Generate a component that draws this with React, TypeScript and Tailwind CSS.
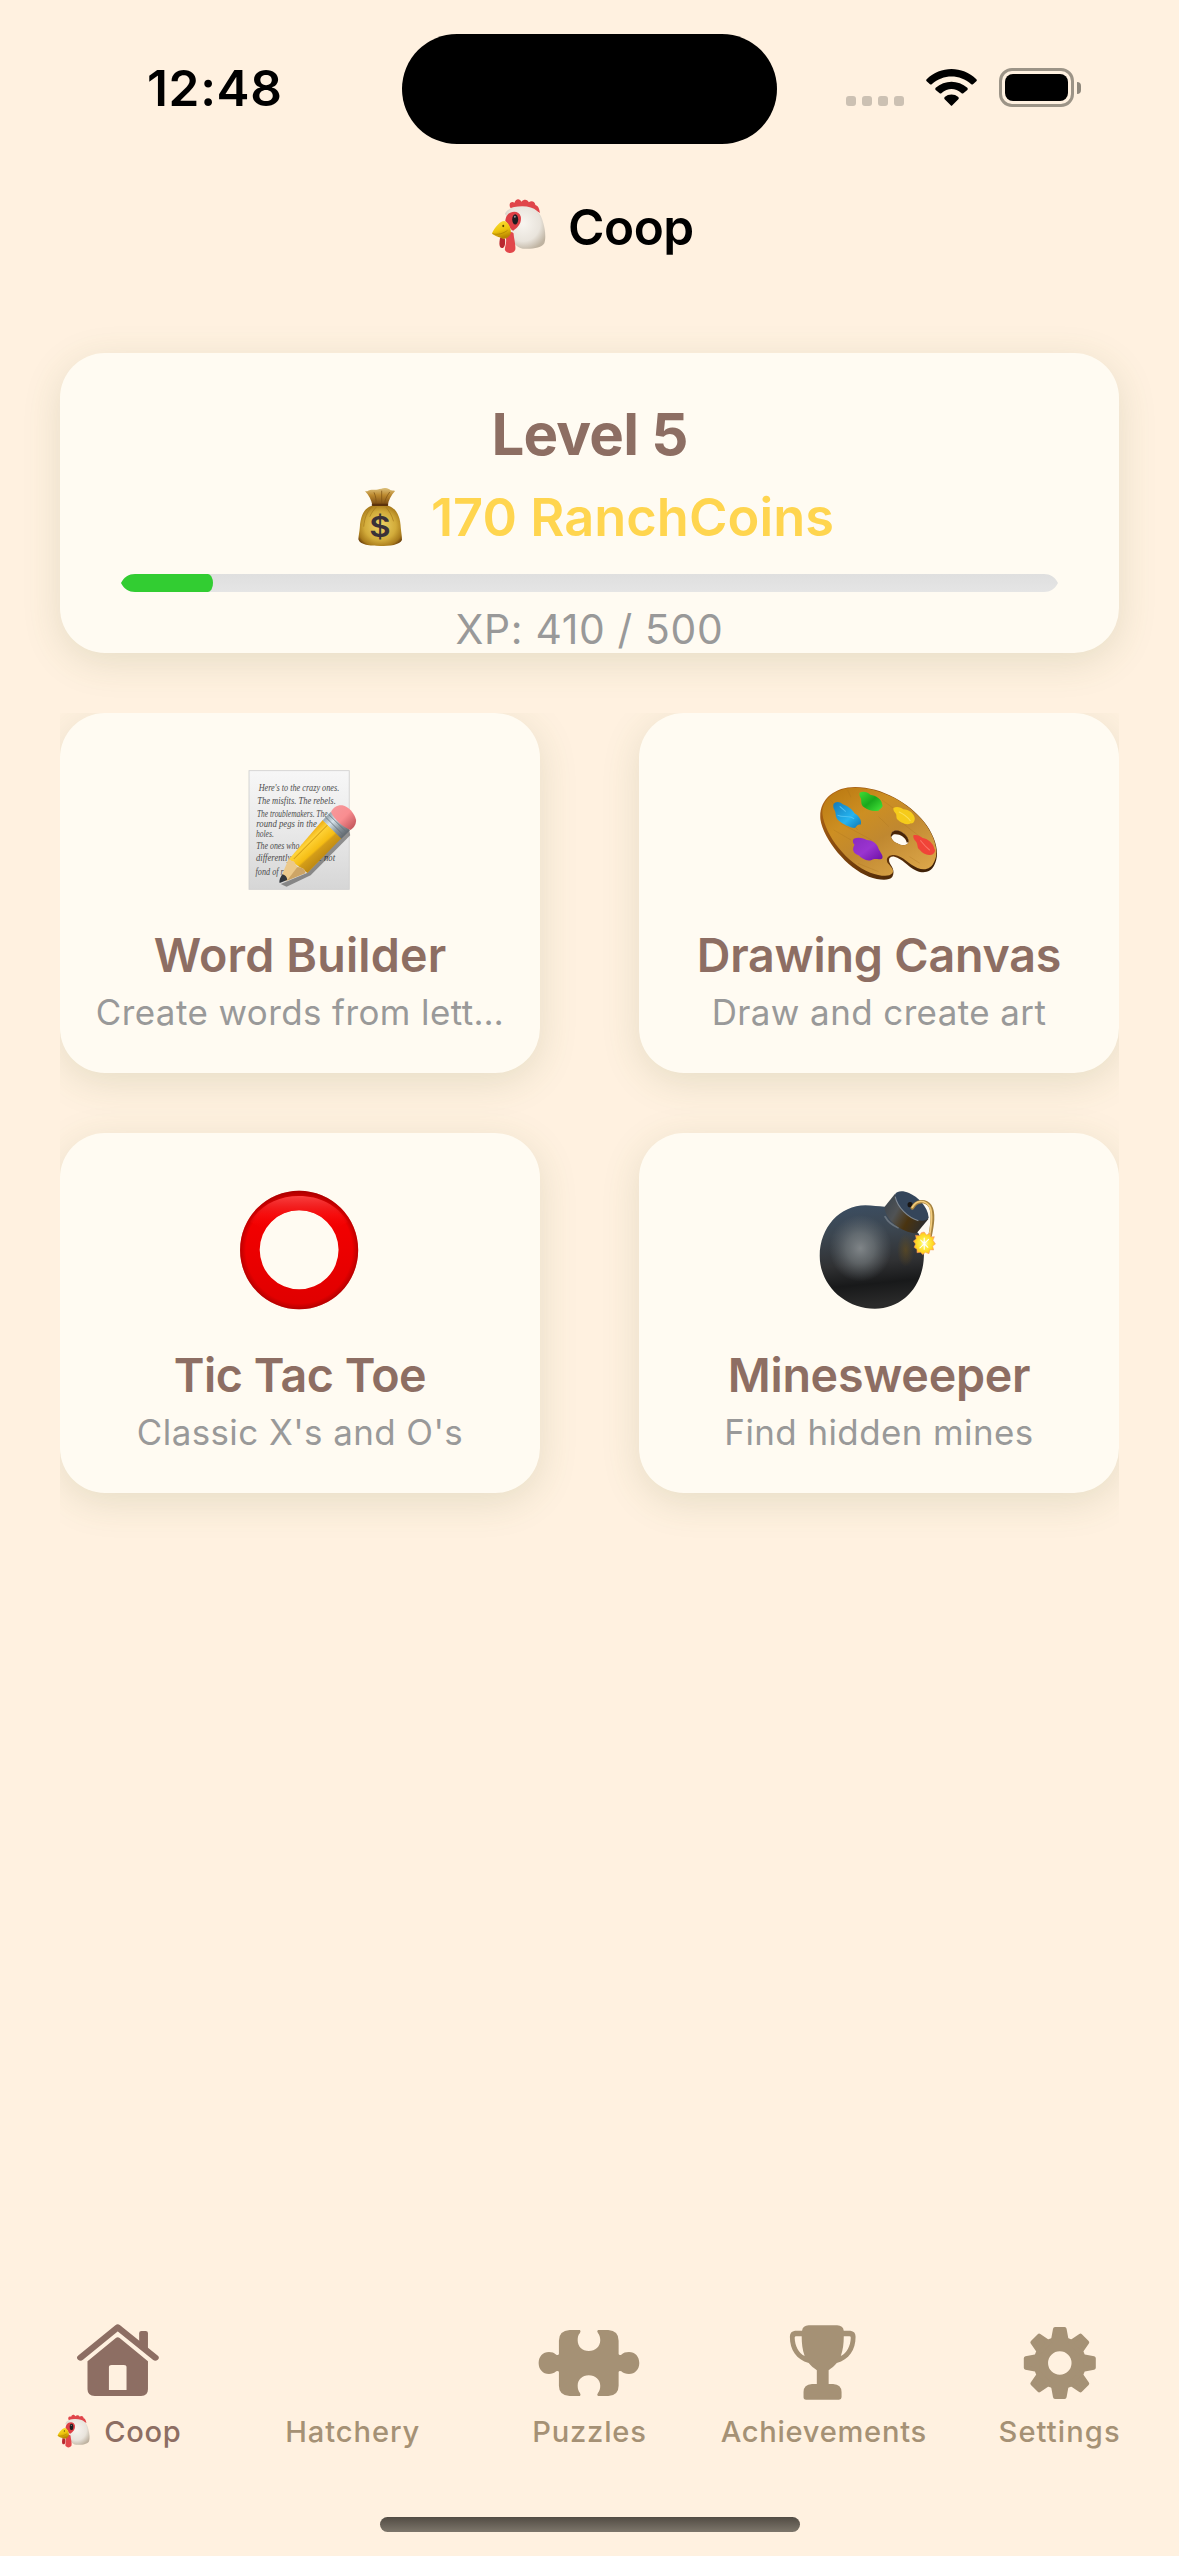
import React from 'react';

function Chicken({ id, className }: { id: string; className: string }) {
  return (
    <svg viewBox="92 54 166 168" preserveAspectRatio="none" className={className} aria-hidden="true">
      <defs>
        <radialGradient id={`${id}-head`} cx="0.45" cy="0.4" r="0.65">
          <stop offset="0" stopColor="#f8f5f0" />
          <stop offset="0.65" stopColor="#e9e4dc" />
          <stop offset="1" stopColor="#bfb3a1" />
        </radialGradient>
        <linearGradient id={`${id}-beak`} x1="0" y1="0" x2="0.3" y2="1">
          <stop offset="0" stopColor="#fbe33c" />
          <stop offset="0.6" stopColor="#edc40c" />
          <stop offset="1" stopColor="#b98500" />
        </linearGradient>
      </defs>
      <path fill="#e0454a" d="M151 84C144 72 152 61 163 68C166 55 179 54 184 65C191 57 203 58 206 67C214 60 225 64 226 75C235 77 238 88 240 99C220 86 180 78 151 84Z" />
      <path fill={`url(#${id}-head)`} d="M134 101C143 84 163 79 186 79C226 79 243 98 250 130C256 150 258 175 253 190C246 204 215 208 188 206C168 203 155 184 150 160C147 130 142 112 134 101Z" />
      <path fill="#dd4045" d="M141 106C150 92 177 90 182 110C185 132 172 142 159 152C150 150 144 130 135 123C136 117 137 111 141 106Z" />
      <path fill="#b9272e" d="M120 172L134 176C136 190 134 204 125 204C116 204 116 188 120 172Z" />
      <path fill="#e2474b" d="M137 174C139 162 150 150 160 160C161 176 168 198 165 210C160 222 139 222 134 210C133 200 140 190 137 174Z" />
      <ellipse cx="165" cy="118" rx="9" ry="15.5" fill="#1d1d20" />
      <ellipse cx="164" cy="110" rx="3" ry="3" fill="#8f939b" />
      <path fill={`url(#${id}-beak)`} d="M95 160C104 142 119 123 132 123C145 126 152 142 152 158C147 175 131 181 122 173C112 171 100 167 95 160Z" />
      <path d="M96 161C112 166 130 160 142 151" fill="none" stroke="#9b6f00" strokeWidth="1.6" />
      <ellipse cx="129" cy="138" rx="3" ry="3.5" fill="#5e4700" />
    </svg>
  );
}

function MoneyBag() {
  return (
    <svg viewBox="831 465 167.2 192" preserveAspectRatio="none" className="h-16 w-16 shrink-0" aria-hidden="true">
      <defs>
        <radialGradient id="bag-body" cx="0.5" cy="0.5" r="0.6">
          <stop offset="0" stopColor="#efd468" />
          <stop offset="0.6" stopColor="#d2ab3a" />
          <stop offset="0.88" stopColor="#a87a1b" />
          <stop offset="1" stopColor="#70440d" />
        </radialGradient>
        <linearGradient id="bag-top" x1="0" y1="0" x2="0" y2="1">
          <stop offset="0" stopColor="#dcc07c" />
          <stop offset="0.4" stopColor="#bd8a2f" />
          <stop offset="1" stopColor="#70420f" />
        </linearGradient>
      </defs>
      <path fill="url(#bag-top)" d="M875 483C881 487 886 478 894 479C904 481 910 477 918 476C925 473 933 474 939 478C944 484 948 479 954 483C944 496 936 511 935 527H895C892 510 886 496 875 483Z" />
      <path fill="none" stroke="#7d5215" strokeWidth="2" d="M899 487C904 500 905 512 904 522M919 482V522M940 486C931 500 928 510 926 522" />
      <path fill="url(#bag-body)" d="M893 527H936C958 535 968 560 969 595C970 608 972 618 972 630C966 645 940 648 915 648C888 648 862 645 858 628C859 615 861 605 862 590C864 558 873 534 893 527Z" />
      <path fill="none" stroke="#a67a1d" strokeWidth="2" d="M893 531C880 546 874 565 872 590M905 531C898 540 892 548 888 560M930 531C938 542 946 556 950 574" />
      <rect x="893" y="521" width="43" height="7" rx="3" fill="#5c330c" />
      <text x="914.5" y="622" textAnchor="middle" fontSize="86" className="font-['Inter'] font-semibold" fill="#3a3138">$</text>
    </svg>
  );
}

const NOTE_LINES = [
  { text: "Here's to the crazy ones.", x: 664, y: 302, w: 234 },
  { text: 'The misfits. The rebels.', x: 660, y: 341, w: 228 },
  { text: 'The troublemakers. The', x: 659, y: 380, w: 205 },
  { text: 'round pegs in the', x: 657, y: 410, w: 176 },
  { text: 'holes.', x: 656, y: 440, w: 52 },
  { text: 'The ones who see', x: 657, y: 478, w: 160 },
  { text: 'differently. They’re not', x: 656, y: 512, w: 230 },
  { text: 'fond of rules', x: 655, y: 554, w: 120 },
];

function Memo() {
  return (
    <svg viewBox="609.8 240 348.5 360" preserveAspectRatio="none" className="size-[120px]" aria-hidden="true">
      <defs>
        <linearGradient id="memo-paper" x1="0" y1="0" x2="0" y2="1">
          <stop offset="0" stopColor="#f7f7f7" />
          <stop offset="0.5" stopColor="#e9e9e9" />
          <stop offset="1" stopColor="#d6d6d6" />
        </linearGradient>
        <linearGradient id="memo-pencil" gradientUnits="userSpaceOnUse" x1="800" y1="440" x2="860" y2="505">
          <stop offset="0" stopColor="#eeb11a" />
          <stop offset="0.2" stopColor="#ffd338" />
          <stop offset="0.55" stopColor="#f5bd14" />
          <stop offset="0.62" stopColor="#d49d18" />
          <stop offset="1" stopColor="#b98512" />
        </linearGradient>
        <linearGradient id="memo-eraser" x1="0" y1="0" x2="1" y2="1">
          <stop offset="0" stopColor="#f59a9c" />
          <stop offset="0.5" stopColor="#f98d90" />
          <stop offset="1" stopColor="#b84a50" />
        </linearGradient>
        <linearGradient id="memo-ferrule" gradientUnits="userSpaceOnUse" x1="860" y1="370" x2="920" y2="435">
          <stop offset="0" stopColor="#83929d" />
          <stop offset="0.35" stopColor="#d6e3ea" />
          <stop offset="0.65" stopColor="#8b979f" />
          <stop offset="1" stopColor="#5c6368" />
        </linearGradient>
      </defs>
      <rect x="636" y="242" width="291" height="356" fill="url(#memo-paper)" stroke="#cfcfcf" strokeWidth="2.5" />
      {NOTE_LINES.map((l) => (
        <text key={l.text} x={l.x} y={l.y} textLength={l.w} lengthAdjust="spacingAndGlyphs" fontSize="28" fill="#4c4c4c" className="font-['Liberation_Serif'] italic">
          {l.text}
        </text>
      ))}
      <path fill="#000" opacity="0.38" d="M728 582L745 590L815 556L930 436L926 418L806 548Z" />
      <path fill="url(#memo-pencil)" d="M850 390L905 444L806 549L752 508Z" />
      <path fill="none" stroke="#d59f15" strokeWidth="3" d="M864 405L766 507" />
      <path fill="#ecc98b" d="M752 504C756 516 764 510 768 516C774 528 776 534 784 532C796 536 800 540 799 550L740 574L727 566Z" />
      <path fill="#cda566" d="M776 532C790 532 800 538 799 550L746 572Z" />
      <path fill="#33373c" d="M733 553C741 555 747 562 747 570L725 579C722 572 728 560 733 553Z" />
      <path fill="url(#memo-ferrule)" d="M874 365L929 421L904 446L850 391Z" />
      <path fill="none" stroke="#66717a" strokeWidth="2.5" d="M867 373L921 428M859 382L912 437" />
      <path fill="url(#memo-eraser)" d="M874 366C880 352 894 344 907 346C926 350 942 370 947 390C947 404 940 414 930 420C908 410 884 390 874 366Z" />
    </svg>
  );
}

function Palette() {
  return (
    <svg viewBox="607 240 348.5 360" preserveAspectRatio="none" className="size-[120px]" aria-hidden="true">
      <defs>
        <linearGradient id="pal-wood" x1="0" y1="0" x2="0.8" y2="1">
          <stop offset="0" stopColor="#b8760f" />
          <stop offset="0.35" stopColor="#cd8f22" />
          <stop offset="0.6" stopColor="#c08830" />
          <stop offset="1" stopColor="#dba548" />
        </linearGradient>
        <linearGradient id="pal-edge" x1="0" y1="0" x2="1" y2="1">
          <stop offset="0" stopColor="#b86a16" />
          <stop offset="0.6" stopColor="#6d3a0a" />
          <stop offset="1" stopColor="#2f1806" />
        </linearGradient>
        <linearGradient id="pal-blue" x1="0" y1="0" x2="1" y2="1">
          <stop offset="0" stopColor="#1479b8" />
          <stop offset="0.6" stopColor="#25b4f0" />
          <stop offset="1" stopColor="#1276b0" />
        </linearGradient>
        <linearGradient id="pal-green" x1="0" y1="0" x2="1" y2="1">
          <stop offset="0" stopColor="#3fdc35" />
          <stop offset="0.5" stopColor="#19a81c" />
          <stop offset="1" stopColor="#46e83c" />
        </linearGradient>
        <linearGradient id="pal-purple" x1="0" y1="0" x2="1" y2="1">
          <stop offset="0" stopColor="#8a2bc0" />
          <stop offset="0.5" stopColor="#9a34d0" />
          <stop offset="1" stopColor="#6b0fa4" />
        </linearGradient>
      </defs>
      <path fill="url(#pal-edge)" fillRule="evenodd" d="M611 388C606 330 650 291 712 291C790 291 870 340 912 395C945 438 960 490 942 525C932 546 912 552 890 542C862 528 850 506 826 500C812 498 806 508 814 522C824 536 826 548 820 560C810 574 780 570 752 560C690 536 620 450 611 388ZM816 440C814 426 824 419 838 422C856 428 868 442 867 456C864 468 846 468 834 460C824 456 818 448 816 440Z" />
      <path fill="url(#pal-wood)" fillRule="evenodd" d="M617 372C614 328 656 293 712 293C790 293 868 340 910 394C942 436 956 482 943 512C933 538 914 542 893 534C866 522 852 498 826 495C808 494 800 506 806 518C818 532 826 540 820 550C810 562 784 558 756 548C690 522 624 436 617 372ZM816 440C814 426 824 419 838 422C856 428 868 442 867 456C864 468 846 468 834 460C824 456 818 448 816 440Z" />
      <path fill="#4a2506" d="M816 442C814 426 824 419 838 422C856 428 868 442 867 456L862 458C858 440 838 430 822 434Z" />
      <path fill="none" stroke="#a3691a" strokeWidth="2" opacity="0.35" d="M640 330L720 420M670 400L760 450M690 300L700 322M790 330L830 360M650 420L700 450M850 400L900 440M720 520L780 545M870 500L900 520M780 380L810 410" />
      <path fill="url(#pal-blue)" d="M649 343C655 333 667 334 676 343C690 348 704 358 710 370C722 376 733 392 728 404C718 400 716 412 710 414C696 412 676 402 665 392C652 382 658 370 652 360C648 354 648 348 649 343Z" />
      <path fill="none" stroke="#4cc0f0" strokeWidth="3" d="M662 376C678 384 694 374 708 386M668 350L684 364" strokeLinecap="round" />
      <path fill="url(#pal-green)" d="M725 308C734 302 748 305 756 314C772 316 790 328 790 342C796 352 784 356 780 362C766 366 748 360 738 352C726 344 732 332 728 324C724 318 724 312 725 308Z" />
      <path fill="#f5cb1b" d="M823 354C832 348 846 352 852 358C868 358 884 372 885 384C886 394 880 402 874 400C860 408 842 396 834 388C830 380 834 374 828 368C824 364 822 358 823 354Z" />
      <path fill="none" stroke="#fbdf55" strokeWidth="3" strokeLinecap="round" d="M840 366C856 374 862 378 872 392" />
      <path fill="#f04438" d="M881 436C890 432 902 438 908 444C924 446 940 462 942 476C948 484 938 494 934 494C920 498 908 490 900 480C890 474 896 464 888 454C882 448 880 442 881 436Z" />
      <path fill="none" stroke="#fb7568" strokeWidth="3" strokeLinecap="round" d="M902 452C910 462 916 470 928 480" />
      <path fill="url(#pal-purple)" d="M708 446C720 440 738 444 746 450C760 450 776 460 780 476C784 486 796 498 790 506C780 510 768 504 760 510C746 516 732 506 722 496C706 490 702 478 710 464C704 458 704 450 708 446Z" />
    </svg>
  );
}

function Ring() {
  return (
    <svg viewBox="609.8 240 348.5 360" preserveAspectRatio="none" className="size-[120px]" aria-hidden="true">
      <defs>
        <linearGradient id="ring-base" x1="0" y1="0" x2="0" y2="1">
          <stop offset="0" stopColor="#c40000" />
          <stop offset="0.2" stopColor="#f40000" />
          <stop offset="1" stopColor="#df0000" />
        </linearGradient>
        <radialGradient id="ring-rim" cx="0.5" cy="0.5" r="0.5">
          <stop offset="0.9" stopColor="#8a0000" stopOpacity="0" />
          <stop offset="1" stopColor="#8a0000" stopOpacity="0.5" />
        </radialGradient>
        <linearGradient id="ring-shine" x1="0" y1="0" x2="0" y2="1">
          <stop offset="0" stopColor="#fa4141" />
          <stop offset="1" stopColor="#f80000" stopOpacity="0" />
        </linearGradient>
      </defs>
      <path fill="url(#ring-base)" fillRule="evenodd" d="M610 420A171.5 178 0 1 1 953 420A171.5 178 0 1 1 610 420ZM667 419.5A114.5 118.5 0 1 0 896 419.5A114.5 118.5 0 1 0 667 419.5Z" />
      <path fill="url(#ring-rim)" fillRule="evenodd" d="M610 420A171.5 178 0 1 1 953 420A171.5 178 0 1 1 610 420ZM667 419.5A114.5 118.5 0 1 0 896 419.5A114.5 118.5 0 1 0 667 419.5Z" />
      <path fill="url(#ring-shine)" d="M640 336C670 284 722 258 781 258C840 258 892 284 923 336L880 360C858 322 824 301 781 301C738 301 704 322 683 360Z" />
    </svg>
  );
}

function Bomb() {
  return (
    <svg viewBox="576 240 330.7 360" preserveAspectRatio="none" className="size-[120px]" aria-hidden="true">
      <defs>
        <linearGradient id="bomb-body" x1="0" y1="0" x2="0.1" y2="1">
          <stop offset="0" stopColor="#3b4e63" />
          <stop offset="0.3" stopColor="#3c4650" />
          <stop offset="0.6" stopColor="#303133" />
          <stop offset="0.8" stopColor="#18191a" />
          <stop offset="1" stopColor="#2a2a2a" />
        </linearGradient>
        <radialGradient id="bomb-glow" cx="0.5" cy="0.5" r="0.5">
          <stop offset="0" stopColor="#888d90" stopOpacity="0.9" />
          <stop offset="0.45" stopColor="#7d8487" stopOpacity="0.6" />
          <stop offset="1" stopColor="#6d757b" stopOpacity="0" />
        </radialGradient>
        <linearGradient id="bomb-neck" x1="0" y1="0.1" x2="1" y2="0.6">
          <stop offset="0" stopColor="#39424c" />
          <stop offset="0.35" stopColor="#505355" />
          <stop offset="0.65" stopColor="#4a3410" />
          <stop offset="1" stopColor="#2e2d2c" />
        </linearGradient>
        <radialGradient id="bomb-spark" cx="0.5" cy="0.5" r="0.5">
          <stop offset="0" stopColor="#fffde8" />
          <stop offset="0.35" stopColor="#fff04a" />
          <stop offset="0.85" stopColor="#ffd21e" />
          <stop offset="1" stopColor="#ff9a5a" />
        </radialGradient>
        <radialGradient id="bomb-amber" cx="0.5" cy="0.5" r="0.5">
          <stop offset="0" stopColor="#6f5216" stopOpacity="0.55" />
          <stop offset="1" stopColor="#6f5216" stopOpacity="0" />
        </radialGradient>
      </defs>
      <path fill="url(#bomb-body)" d="M578 438C578 352 634 286 704 286C724 286 740 290 757 290L850 370C862 392 866 415 865 440C862 530 806 596 730 596C646 596 578 524 578 438Z" />
      <ellipse cx="690" cy="415" rx="86" ry="100" fill="url(#bomb-glow)" />
      <ellipse cx="815" cy="420" rx="24" ry="50" fill="url(#bomb-amber)" />
      <path fill="none" stroke="#8d969e" strokeWidth="5" opacity="0.55" strokeLinecap="round" d="M758 320C766 336 778 346 794 353" />
      <path fill="url(#bomb-neck)" d="M785 252L757 290C756 325 800 368 845 370L878 326Z" />
      <path fill="#34455a" d="M786 252C792 242 808 242 824 249C848 260 876 290 878 322C874 334 858 334 846 330C820 320 788 288 786 252Z" />
      <path fill="none" stroke="#8d99a6" strokeWidth="3" opacity="0.8" d="M786 260C792 292 822 324 850 332" />
      <ellipse cx="827" cy="284" rx="7" ry="8" fill="#191512" />
      <path fill="none" stroke="#a5823f" strokeWidth="10" strokeLinecap="round" d="M833 294C844 272 868 268 882 288C894 308 888 345 882 378" />
      <path fill="none" stroke="#f2cc7c" strokeWidth="5" strokeLinecap="round" d="M833 292C844 271 866 268 880 288C891 308 886 345 880 378" />
      <path fill="url(#bomb-spark)" stroke="#f99a50" strokeWidth="1.5" d="M866 366L872 375L882 370L884 381L894 380L890 391L897 402L889 408L892 420L882 419L879 431L869 427L862 434L856 427L846 428L846 418L838 412L842 402L836 393L844 387L842 376L853 377L858 368Z" />
      <path stroke="#fff" strokeWidth="3" strokeLinecap="round" d="M856 390L876 412M878 388L854 414M866 384V418" />
    </svg>
  );
}

const GAMES = [
  { art: <Memo />, title: 'Word Builder', titleClass: 'tracking-[0.17px]', sub: 'Create words from lett…' },
  { art: <Palette />, title: 'Drawing Canvas', titleClass: 'tracking-[-0.2px]', sub: 'Draw and create art' },
  { art: <Ring />, title: 'Tic Tac Toe', titleClass: 'tracking-[-0.5px]', sub: "Classic X's and O's" },
  { art: <Bomb />, title: 'Minesweeper', titleClass: 'tracking-[-0.27px]', sub: 'Find hidden mines' },
];

function StatusBar() {
  return (
    <div className="relative flex h-[150px] justify-between pr-[98px] pl-[147px]">
      <div className="mt-[58px] text-[49.5px] leading-[60px] font-semibold tracking-[0.69px]">12:48</div>
      <div className="absolute top-[34px] left-[402px] h-[110px] w-[375px] rounded-full bg-black" />
      <div className="mt-[68px] flex h-[39px] items-start">
        <div className="mt-7 flex gap-1.5">
          <i className="size-2.5 rounded-[3px] bg-[#ccc1b3]" />
          <i className="size-2.5 rounded-[3px] bg-[#ccc1b3]" />
          <i className="size-2.5 rounded-[3px] bg-[#ccc1b3]" />
          <i className="size-2.5 rounded-[3px] bg-[#ccc1b3]" />
        </div>
        <svg viewBox="438 144 153 117" className="ml-[22px] h-[39px] w-[51px]" aria-hidden="true">
          <path d="M440 178C482 137 547 137 589 178Q592 181 589 184L579 193Q576 195 573 192C540 162 489 162 456 192Q453 195 450 193L440 184Q437 181 440 178Z" />
          <path d="M467 203C494 179 535 179 562 203Q565 207 562 210L550 220Q547 222 544 219C526 203 503 203 485 219Q482 222 479 220L467 210Q464 207 467 203Z" />
          <path d="M494 231C506 221 523 221 535 231Q538 235 535 238L517 256Q514.5 259 512 256L494 238Q491 235 494 231Z" />
        </svg>
        <div className="ml-[22px] h-[39px] w-[75px] rounded-[13px] border-3 border-[#9c9487] p-[3px]">
          <div className="h-full w-full rounded-[8px] bg-black" />
        </div>
        <div className="mt-[13.5px] ml-[3px] h-3 w-1 rounded-r-full bg-[#8f887c]" />
      </div>
    </div>
  );
}

function LevelCard() {
  return (
    <section className="mx-[60px] flex h-[300px] flex-col items-center rounded-[45px] bg-[#fffbf2] px-[61px] pt-[45px] shadow-[0_9px_38px_rgba(85,107,47,0.15)]">
      <h2 className="text-[58.2px] leading-[72px] font-bold tracking-[-0.79px] text-[#8d6e63]">Level 5</h2>
      <div className="mt-[15px] flex h-16 items-center gap-[19px] pl-[3px]">
        <MoneyBag />
        <span className="text-[52.3px] leading-[64px] font-semibold tracking-[0.06px] whitespace-nowrap text-[#ffd54f]">170 RanchCoins</span>
      </div>
      <div className="mt-[25px] h-[18px] w-full shrink-0 bg-linear-to-b from-[#dfdfdf] to-[#e5e5e5] [clip-path:path('M0_9C3_3_8_0_14_0H923C929_0_934_3_937_9C934_15_929_18_923_18H14C8_18_3_15_0_9Z')]">
        <div className="h-full w-[92px] bg-[#32cd32] [border-bottom-right-radius:5px_9px] [border-top-right-radius:5px_9px]" />
      </div>
      <div className="mt-[13px] text-[40.8px] leading-[48px] tracking-[0.68px] whitespace-nowrap text-[#999]">XP: 410 / 500</div>
    </section>
  );
}

function GameGrid() {
  return (
    <section className="mx-[60px] mt-[60px] grid grid-cols-[480px_480px] justify-between gap-y-[60px] overflow-hidden pb-[60px]">
      {GAMES.map((g) => (
        <article key={g.title} className="flex h-[360px] flex-col items-center rounded-[45px] bg-[#fffbf2] pt-[57px] shadow-[0_9px_38px_rgba(85,107,47,0.15)]">
          {g.art}
          <h3 className={`mt-[37px] text-[46.6px] leading-[56px] font-semibold whitespace-nowrap text-[#8d6e63] ${g.titleClass}`}>{g.title}</h3>
          <p className="mt-2 text-[34.9px] leading-[42px] tracking-[0.44px] whitespace-nowrap text-[#999]">{g.sub}</p>
        </article>
      ))}
    </section>
  );
}

const ICON = 'h-[90px] w-[110px] fill-current';

function TabBar() {
  return (
    <nav className="grid grid-cols-5 text-[29.1px] leading-[36px] font-medium text-[#a59175]">
      <div className="flex flex-col items-center text-[#8d6e63]">
        <svg viewBox="86 54 287.4 270" preserveAspectRatio="none" className={ICON} aria-hidden="true">
          <path d="M132 173L229 82L327 173" fill="none" stroke="currentColor" strokeWidth="18" strokeLinecap="round" strokeLinejoin="round" />
          <path d="M285 135V99Q285 93 291 93H302Q308 93 308 99V150Z" />
          <path fillRule="evenodd" d="M224 114Q229 109 234 114L308 184V268Q308 288 290 288H169Q150 288 150 268V184ZM206 270H252V202Q252 195 245 195H213Q206 195 206 202Z" />
        </svg>
        <div className="mt-[6px] flex h-[35px] items-start gap-[14px] pl-[3px]">
          <Chicken id="tab-hen" className="h-[34px] w-[33px]" />
          <span className="tracking-[0.71px]">Coop</span>
        </div>
      </div>
      <div className="flex flex-col items-center">
        <div className={ICON} />
        <span className="mt-[6px] mr-[2px] tracking-[0.93px]">Hatchery</span>
      </div>
      <div className="flex flex-col items-center">
        <svg viewBox="1316.9 54 287.4 270" preserveAspectRatio="none" className={ICON} aria-hidden="true">
          <path d="M1410 90H1437Q1440 93 1437 99C1432 105 1431 112 1431 121C1431 140 1443 153 1460 153C1477 153 1490 140 1490 121C1490 112 1488 105 1484 99Q1480 93 1484 90H1511Q1538 92 1538 122V162Q1539 166 1545 164C1550 158 1557 156 1565 156C1581 156 1592 170 1592 189C1592 208 1581 222 1565 222C1557 222 1550 220 1545 214Q1539 212 1538 216V257Q1538 286 1511 288H1484Q1480 285 1484 279C1488 273 1490 266 1490 257C1490 240 1477 226 1460 226C1443 226 1431 240 1431 257C1431 266 1433 273 1437 279Q1440 285 1437 288H1410Q1382 286 1382 257V216Q1381 212 1375 214C1370 220 1363 222 1356 222C1340 222 1329 208 1329 189C1329 170 1340 156 1356 156C1363 156 1370 158 1375 164Q1381 166 1382 162V122Q1382 92 1410 90Z" />
        </svg>
        <span className="mt-[6px] tracking-[0.81px]">Puzzles</span>
      </div>
      <div className="flex flex-col items-center">
        <svg viewBox="461.2 54 297.9 270" preserveAspectRatio="none" className={ICON} aria-hidden="true">
          <path fillRule="evenodd" d="M548 92Q550 77 566 76H643Q659 77 661 92H679Q693 94 693 110C693 150 675 178 642 189C636 198 628 204 620 211V252H632Q655 254 655 276V292Q655 299 648 299H559Q552 299 552 292V276Q552 254 575 252H588V211C580 204 572 198 566 189C533 178 515 150 515 110Q515 94 529 92ZM547 109H532Q528 109 528 113C529 138 538 158 555 168C549 150 547 130 547 109ZM661 109H676Q680 109 680 113C679 138 670 158 653 168C659 150 661 130 661 109Z" />
        </svg>
        <span className="mt-[6px] mr-[3px] tracking-[0.73px]">Achievements</span>
      </div>
      <div className="flex flex-col items-center">
        <svg viewBox="-53.8 -45 110 90" className={ICON} aria-hidden="true">
          <circle r="19" fill="none" stroke="currentColor" strokeWidth="14.5" />
          {[0, 45, 90, 135, 180, 225, 270, 315].map((a) => (
            <path key={a} transform={`rotate(${a})`} stroke="currentColor" strokeWidth="4" strokeLinejoin="round" d="M-7 -22L-4.8 -34H4.8L7 -22Z" />
          ))}
        </svg>
        <span className="mt-[6px] mr-[3px] tracking-[1.1px]">Settings</span>
      </div>
    </nav>
  );
}

export default function App() {
  return (
    <main className="flex h-[2556px] w-[1179px] flex-col overflow-hidden bg-[#fff1e0] font-['Inter',sans-serif] text-black">
      <StatusBar />
      <header className="flex h-[203px] items-start pt-12 pl-[491px]">
        <Chicken id="title-hen" className="h-14 w-[55px]" />
        <h1 className="-mt-[2px] ml-[22px] text-[49.5px] leading-[62px] font-semibold tracking-[-0.48px]">Coop</h1>
      </header>
      <LevelCard />
      <GameGrid />
      <div className="flex-1" />
      <TabBar />
      <div className="mx-auto mt-[67px] mb-6 h-[15px] w-[420px] shrink-0 rounded-full bg-linear-to-b from-[#524c44] to-[#7d766b]" />
    </main>
  );
}
